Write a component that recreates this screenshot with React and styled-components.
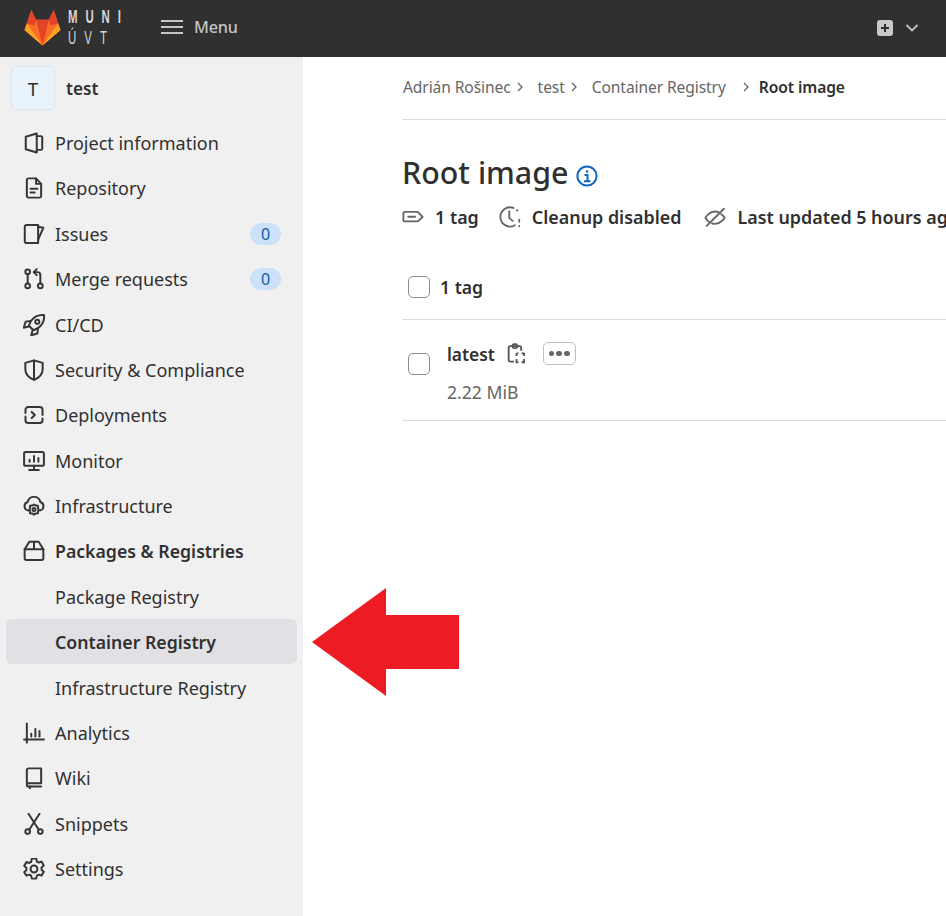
import React from "react";
import styled, { createGlobalStyle } from "styled-components";

const Global = createGlobalStyle`
  html, body { margin: 0; padding: 0; background: #fff; }
  body { font-family: "Noto Sans", "Open Sans", sans-serif; color: #303030; }
  * { box-sizing: border-box; }
`;

const Page = styled.div`
  position: relative;
  width: 946px;
  height: 916px;
  overflow: hidden;
  display: flex;
  flex-direction: column;
`;

const TopBar = styled.header`
  height: 57px;
  flex: none;
  background: #303030;
  display: flex;
  align-items: center;
  padding: 0 23px;
`;

const Brand = styled.div`
  display: flex;
  align-items: center;
  gap: 6px;
  width: 138px;
  flex: none;
  margin-top: -3px;
`;

const LogoMark = styled.svg`
  width: 39px;
  height: 37px;
  flex: none;
`;

const Wordmark = styled.div`
  display: flex;
  flex-direction: column;
  width: 60px;
  flex: none;
  font-family: "Liberation Sans", sans-serif;
  font-size: 18.5px;
  line-height: 21.3px;
  color: #d4d4d4;
`;

const WordLine = styled.span`
  letter-spacing: ${(p) => p.$spacing}px;
  font-weight: ${(p) => p.$weight};
  display: block;
  width: max-content;
  transform: scaleX(0.62);
  transform-origin: left center;
  white-space: nowrap;
`;

const MenuButton = styled.div`
  display: flex;
  align-items: center;
  gap: 11px;
  color: #c4c4c4;
  font-size: 16.2px;
  font-weight: 500;
  letter-spacing: -0.2px;
  margin-top: -3px;
`;

const Spacer = styled.div`
  flex: 1;
`;

const NewMenu = styled.div`
  display: flex;
  align-items: center;
  gap: 12px;
  margin-right: 4px;
  margin-top: -1px;
  color: #c4c4c4;
`;

const Body = styled.div`
  flex: 1;
  display: flex;
  min-height: 0;
`;

const Sidebar = styled.aside`
  width: 303px;
  flex: none;
  background: #f0f0f0;
  padding: 9px 6px 0;
`;

const ContextRow = styled.div`
  display: flex;
  align-items: center;
  gap: 11px;
  padding-left: 5px;
  height: 44px;
  margin-bottom: 10.36px;
`;

const Avatar = styled.div`
  width: 44px;
  height: 44px;
  border-radius: 5px;
  background: #e9f3fc;
  border: 1.5px solid #dde5ed;
  display: flex;
  align-items: center;
  justify-content: center;
  font-size: 18.67px;
  color: #303030;
`;

const ProjectName = styled.span`
  font-size: 17.2px;
  font-weight: 600;
  color: #303030;
`;

const Nav = styled.nav`
  display: flex;
  flex-direction: column;
`;

const Item = styled.div`
  height: 45.38px;
  display: flex;
  align-items: center;
  padding-left: 49px;
  padding-right: 16px;
  position: relative;
  font-size: ${(p) => (p.$bold ? "17.7px" : "18px")};
  color: #303030;
  font-weight: ${(p) => (p.$bold ? 600 : 400)};
`;

const ActiveItem = styled(Item)`
  &::before {
    content: "";
    position: absolute;
    inset: -0.5px 0 1.3px 0;
    background: #e1e0e5;
    border-radius: 6px;
  }
  & > span {
    position: relative;
  }
`;

const NavIcon = styled.svg`
  position: absolute;
  left: 17px;
  top: 50%;
  margin-top: -11px;
  width: 22px;
  height: 22px;
  fill: none;
  stroke: #363636;
  stroke-width: 1.45;
  stroke-linecap: round;
  stroke-linejoin: round;
`;

const Badge = styled.span`
  margin-left: auto;
  width: 31px;
  height: 22px;
  border-radius: 11px;
  background: #cbe2f9;
  color: #0b5cad;
  font-size: 16px;
  display: flex;
  align-items: center;
  justify-content: center;
`;

const Main = styled.main`
  flex: 1;
  min-width: 0;
  padding-left: 99px;
  overflow: hidden;
  white-space: nowrap;
`;

const Breadcrumbs = styled.div`
  height: 63px;
  border-bottom: 1px solid #dbdbdb;
  display: flex;
  align-items: center;
  padding: 0 0 3px 1px;
  font-size: 15.6px;
  letter-spacing: -0.1px;
  color: #666;
`;

const Crumb = styled.span`
  color: ${(p) => (p.$current ? "#303030" : "#666")};
  font-weight: ${(p) => (p.$current ? 600 : 400)};
`;

const CrumbSep = styled.svg`
  width: 10px;
  height: 12px;
  margin: 0 ${(p) => p.$right}px 0 ${(p) => p.$left}px;
  fill: none;
  stroke: #666;
  stroke-width: 1.3;
`;

const Title = styled.h1`
  margin: 29px 0 0;
  font-size: 30.4px;
  line-height: 48px;
  font-weight: 500;
  color: #303030;
  display: flex;
  align-items: center;
  gap: 7px;
`;

const InfoIcon = styled.svg`
  width: 22px;
  height: 22px;
  margin-top: 6px;
  fill: none;
  stroke: #1068bf;
`;

const Meta = styled.div`
  display: flex;
  align-items: center;
  height: 26px;
  margin-top: 7px;
  font-size: 17.9px;
  font-weight: 600;
  color: #303030;
`;

const MetaIcon = styled.svg`
  width: 22px;
  height: 22px;
  flex: none;
  fill: none;
  stroke: #666;
  stroke-width: 1.35;
  stroke-linecap: round;
  stroke-linejoin: round;
  margin-right: 11px;
`;

const MetaItem = styled.span`
  margin-right: ${(p) => p.$gap}px;
`;

const TagsHeader = styled.div`
  height: 66px;
  border-bottom: 1px solid #dbdbdb;
  margin-top: 24px;
  display: flex;
  align-items: center;
  padding-left: 6px;
  gap: 10px;
  font-size: 17.6px;
  font-weight: 600;
  color: #303030;
`;

const Checkbox = styled.span`
  width: 22px;
  height: 22px;
  flex: none;
  background: #fff;
  border: 1.4px solid #8c8c8c;
  border-radius: 5px;
  display: block;
`;

const TagRow = styled.div`
  height: 101px;
  border-bottom: 1px solid #dbdbdb;
  display: flex;
  padding-left: 6px;
  gap: 17px;
`;

const RowCheckbox = styled(Checkbox)`
  margin-top: 33px;
`;

const TagInfo = styled.div`
  display: flex;
  flex-direction: column;
  padding-top: 21px;
`;

const TagNameLine = styled.div`
  display: flex;
  align-items: center;
  height: 25px;
  font-size: 17.4px;
  font-weight: 600;
  letter-spacing: -0.05px;
  color: #303030;
`;

const CopyIcon = styled.svg`
  width: 19px;
  height: 22px;
  margin-left: 12px;
  fill: none;
  stroke: #555;
  stroke-width: 1.45;
  stroke-linejoin: round;
`;

const MoreButton = styled.span`
  width: 33px;
  height: 23px;
  margin-left: 17px;
  border: 1.4px solid #bfbfbf;
  border-radius: 5px;
  background: #fff;
  display: flex;
  align-items: center;
  justify-content: center;
  gap: 2.4px;
`;

const Dot = styled.i`
  width: 5.4px;
  height: 5.4px;
  border-radius: 50%;
  background: #666;
`;

const TagSize = styled.div`
  margin-top: 14px;
  font-size: 17.6px;
  line-height: 24px;
  color: #666;
`;

const Callout = styled.svg`
  position: absolute;
  left: 312px;
  top: 588px;
  width: 147px;
  height: 108px;
`;

const Logo = () => (
  <LogoMark viewBox="0 0 39 38" aria-hidden="true">
    <path d="M19.5 37.5 L1 21.5 L8 1 L13 11 H26 L31 1 L38 21.5Z" fill="#fc6d26" />
    <path d="M19.5 37.5 L13 11 H26Z" fill="#e24329" />
    <path d="M19.5 37.5 L1 21.5 L3.5 15 Z" fill="#fca326" />
    <path d="M19.5 37.5 L38 21.5 L35.5 15 Z" fill="#fca326" />
    <path d="M3.5 15 L8 1 L13 11 L11 17Z" fill="#e24329" />
    <path d="M35.5 15 L31 1 L26 11 L28 17Z" fill="#e24329" />
  </LogoMark>
);

const icons = {
  project: <><path d="M2 3.4 L10 1.1 V14.9 L2 12.6Z" /><path d="M10 3H13a1 1 0 0 1 1 1v8a1 1 0 0 1-1 1H10" /></>,
  repo: <><path d="M9.5 1H4a1.2 1.2 0 0 0-1.2 1.2v11.6A1.2 1.2 0 0 0 4 15h8a1.2 1.2 0 0 0 1.2-1.2V5z" /><path d="M9.5 1v4h3.7" /><path d="M5.5 8.6h5M5.500 11.2h3" /></>,
  issues: <><path d="M2.500 1.500H11v13H2.500A1.200 1.200 0 0 1 1.300 13.300V2.700a1.200 1.200 0 0 1 1.200-1.200z" /><path d="M11 2.800 L14.800 3.500 L11 12" /></>,
  merge: <><circle cx="3.4" cy="2.800" r="1.700" /><circle cx="3.4" cy="13" r="1.700" /><circle cx="12.600" cy="13" r="1.700" /><path d="M3.4 4.600v6.600M12.600 11.200V5a2 2 0 0 0-2-2H8" /><path d="M10 .8 7.800 3l2.200 2.200" /></>,
  rocket: <><path d="M15.300.8c-4-.4-7.200 1.300-9.500 4.200L4.200 8.400l3.400 3.400 3.400-1.600C13.900 8 15.700 4.800 15.300.8z" /><circle cx="10.400" cy="5.700" r="1.500" /><path d="M5.800 5 1.900 5.700.5 10l3.700-.9M11 10.200l-.6 4L6 15.500l.9-3.500" /></>,
  shield: <><path d="M8 1 L14.300 2.800 V7.500 C14.300 11 11.500 13.800 8 15.200 C4.500 13.800 1.700 11 1.700 7.500 V2.800Z" /><path d="M8 1v14" /></>,
  deploy: <><path d="M1.800 6.500V4.200a2 2 0 0 1 2-2H12.200a2 2 0 0 1 2 2V8" /><path d="M14.200 10.500V11.800a2 2 0 0 1-2 2H3.800a2 2 0 0 1-2-2V9" /><path d="M6.300 5.800 8.600 8 6.300 10.200" /></>,
  monitor: <><rect x=".8" y="1.500" width="14.400" height="10" rx="1.200" /><path d="M8 11.500v3M4.500 14.500h7M4.800 8.500V7M8 8.500V4.300M11.200 8.500V5.800" /></>,
  infra: <><path d="M3.700 11.300A3.200 3.200 0 0 1 3.400 5.100 4.700 4.700 0 0 1 12.600 5.100 3.200 3.200 0 0 1 12.300 11.300" /><circle cx="8" cy="10.500" r="1.100" /><path d="M8 6.900 9.300 7.700 10.900 7.900 11 9.700 11.300 10.500 11 11.500 10.900 13.200 9.300 13.400 8 14.300 6.700 13.400 5.100 13.200 5 11.500 4.700 10.500 5 9.700 5.100 7.900 6.700 7.700Z" /></>,
  pack: <><path d="M4.600 1.300h6.800L14.800 6.800v6.500a1.200 1.200 0 0 1-1.200 1.200H2.400a1.200 1.200 0 0 1-1.200-1.200V6.800z" /><path d="M1.200 6.800h13.600M8 1.300V6.800" /></>,
  chart: <><path d="M.8 12.700h14.400M2.800 1v14" /><path d="M6 10.500V8.500M9 10.500V5M12 10.500V6.500" /></>,
  wiki: <><path d="M2.800 12.700V2.200A1.200 1.200 0 0 1 4 1H13.200v10.800H4A1.200 1.200 0 0 0 2.800 13a1.200 1.200 0 0 0 1.200 1.200h9.200" /><path d="M5 14.200v1.300" /></>,
  snippet: <><circle cx="3.400" cy="13.500" r="1.700" /><circle cx="12.600" cy="13.500" r="1.700" /><path d="M4.500 12.200 12 .5M11.500 12.200 4 .5" /></>,
  settings: <><path d="M6.400.7h3.200l.5 2.200 1.300.7 2.100-.7 1.600 2.800-1.600 1.500v1.600l1.600 1.500-1.600 2.800-2.100-.7-1.300.7-.5 2.200H6.400l-.5-2.200-1.300-.7-2.100.7L.9 10.600 2.500 9.100V7.500L.9 6l1.600-2.800 2.100.7 1.300-.7z" transform="translate(0 -.3)" /><circle cx="8" cy="8" r="2.500" /></>,
};

const Nv = ({ name }) => <NavIcon viewBox="0 0 16 16">{icons[name]}</NavIcon>;

const navTop = [
  ["project", "Project information"],
  ["repo", "Repository"],
  ["issues", "Issues", "0"],
  ["merge", "Merge requests", "0"],
  ["rocket", "CI/CD"],
  ["shield", "Security & Compliance"],
  ["deploy", "Deployments"],
  ["monitor", "Monitor"],
  ["infra", "Infrastructure"],
];

const navBottom = [
  ["chart", "Analytics"],
  ["wiki", "Wiki"],
  ["snippet", "Snippets"],
  ["settings", "Settings"],
];

const Sep = (p) => (
  <CrumbSep viewBox="0 0 10 12" {...p}><path d="M3 2l4 4-4 4" /></CrumbSep>
);

export default function App() {
  return (
    <Page>
      <Global />
      <TopBar>
        <Brand>
          <Logo />
          <Wordmark>
            <WordLine $spacing={12.7} $weight={700}>MUNI</WordLine>
            <WordLine $spacing={13} $weight={400}>ÚVT</WordLine>
          </Wordmark>
        </Brand>
        <MenuButton>
          <svg width="22" height="16" viewBox="0 0 22 16" fill="none" stroke="#c4c4c4" strokeWidth="2">
            <path d="M0 2h22M0 8h22M0 14h22" />
          </svg>
          Menu
        </MenuButton>
        <Spacer />
        <NewMenu>
          <svg width="16" height="16" viewBox="0 0 16 16">
            <rect width="16" height="16" rx="3" fill="#c9c9c9" />
            <path d="M8 4v8M4 8h8" stroke="#303030" strokeWidth="2" />
          </svg>
          <svg width="14" height="10" viewBox="0 0 14 10" fill="none" stroke="#c4c4c4" strokeWidth="1.8">
            <path d="M1.500 2l5.500 5.500L12.500 2" />
          </svg>
        </NewMenu>
      </TopBar>
      <Body>
        <Sidebar>
          <ContextRow>
            <Avatar>T</Avatar>
            <ProjectName>test</ProjectName>
          </ContextRow>
          <Nav>
            {navTop.map(([icon, label, badge]) => (
              <Item key={label}>
                <Nv name={icon} />
                {label}
                {badge && <Badge>{badge}</Badge>}
              </Item>
            ))}
            <Item $bold>
              <Nv name="pack" />
              Packages & Registries
            </Item>
            <Item>Package Registry</Item>
            <ActiveItem $bold><span>Container Registry</span></ActiveItem>
            <Item>Infrastructure Registry</Item>
            {navBottom.map(([icon, label]) => (
              <Item key={label}>
                <Nv name={icon} />
                {label}
              </Item>
            ))}
          </Nav>
        </Sidebar>
        <Main>
          <Breadcrumbs>
            <Crumb>Adrián Rošinec</Crumb>
            <Sep $left={4} $right={13} />
            <Crumb>test</Crumb>
            <Sep $left={4} $right={13} />
            <Crumb>Container Registry</Crumb>
            <Sep $left={15} $right={8} />
            <Crumb $current>Root image</Crumb>
          </Breadcrumbs>
          <Title>
            Root image
            <InfoIcon viewBox="0 0 22 22">
              <circle cx="11" cy="11" r="9.600" strokeWidth="2" />
              <path d="M8.500 10h3v6M8 16.200h6.500" strokeWidth="2" />
              <circle cx="11" cy="6.500" r="1.300" fill="#1068bf" stroke="none" />
            </InfoIcon>
          </Title>
          <Meta>
            <MetaIcon viewBox="0 0 16 16">
              <path d="M2 4.300h9.500L15 8l-3.500 3.200H2a1 1 0 0 1-1-1V5.300a1 1 0 0 1 1-1z" />
              <path d="M4.500 7.800h5" />
            </MetaIcon>
            <MetaItem $gap={20}>1 tag</MetaItem>
            <MetaIcon viewBox="0 0 16 16">
              <path d="M10.500 1.400A7 7 0 1 0 11.500 14" />
              <path d="M7.500 3.800v5l2.500 2" />
              <path d="M14.700 10v1.500M14.700 14.500v.3M13 3l.4.4" />
            </MetaIcon>
            <MetaItem $gap={23}>Cleanup disabled</MetaItem>
            <MetaIcon viewBox="0 0 16 16">
              <path d="M4 11.800C2 10.600 1 8.500 1 8.500S3.500 4 8 4c1 0 2 .2 2.800.6" />
              <path d="M12.500 6C14.200 7.200 15 8.500 15 8.500S12.500 13 8 13c-.8 0-1.500-.1-2.200-.4" />
              <path d="M2 14.500 14.500 2" />
            </MetaIcon>
            <MetaItem $gap={0}>Last updated 5 hours ago</MetaItem>
          </Meta>
          <TagsHeader>
            <Checkbox />
            1 tag
          </TagsHeader>
          <TagRow>
            <RowCheckbox />
            <TagInfo>
              <TagNameLine>
                latest
                <CopyIcon viewBox="0 0 15 17">
                  <path d="M5.500 14.500H2.500a1.200 1.200 0 0 1-1.200-1.200V3.500a1.200 1.200 0 0 1 1.200-1.200H10a1.200 1.200 0 0 1 1.200 1.200V6" />
                  <rect x="4.500" y=".8" width="3.500" height="3" rx="1" />
                  <path d="M7.500 8H9M11.500 8H13.500V10M13.500 12.500V15H11.500M9 15H7.500V12.500M7.500 10V8" />
                </CopyIcon>
                <MoreButton><Dot /><Dot /><Dot /></MoreButton>
              </TagNameLine>
              <TagSize>2.22 MiB</TagSize>
            </TagInfo>
          </TagRow>
        </Main>
      </Body>
      <Callout viewBox="0 0 147 108">
        <path d="M0 54 L74 0 V27 H147 V81 H74 V108Z" fill="#ed1c24" />
      </Callout>
    </Page>
  );
}
